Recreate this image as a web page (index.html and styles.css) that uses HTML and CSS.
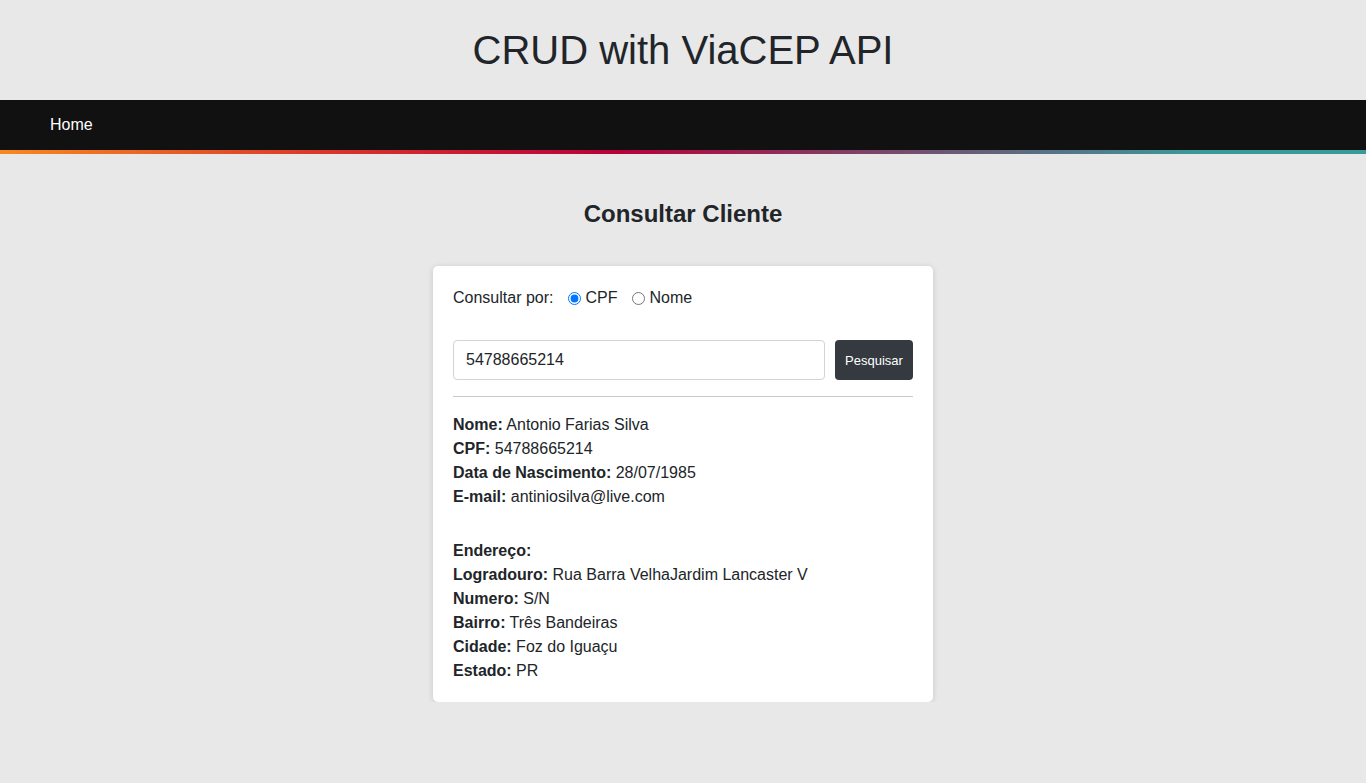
FILE: index.html
```html
<!DOCTYPE html>
<html lang="pt-BR">
<head>
<meta charset="utf-8">
<title>CRUD with ViaCEP API</title>
<link rel="stylesheet" href="styles.css">
</head>
<body>
<header class="site-header">
  <h1 class="site-title">CRUD with ViaCEP API</h1>
</header>
<nav class="navbar">
  <a class="nav-link" href="#">Home</a>
</nav>
<div class="nav-stripe"></div>
<main class="main">
  <h2 class="page-title">Consultar Cliente</h2>
  <section class="card">
    <div class="search-by">
      <span class="search-label">Consultar por:</span>
      <label class="radio"><input type="radio" name="by" checked> CPF</label>
      <label class="radio"><input type="radio" name="by"> Nome</label>
    </div>
    <div class="search-row">
      <input class="search-input" type="text" value="54788665214">
      <button class="search-btn" type="button">Pesquisar</button>
    </div>
    <hr class="divider">
    <div class="info">
      <div><b>Nome:</b> Antonio Farias Silva</div>
      <div><b>CPF:</b> 54788665214</div>
      <div><b>Data de Nascimento:</b> 28/07/1985</div>
      <div><b>E-mail:</b> antiniosilva@live.com</div>
    </div>
    <div class="info address">
      <div><b>Endereço:</b></div>
      <div><b>Logradouro:</b> Rua Barra VelhaJardim Lancaster V</div>
      <div><b>Numero:</b> S/N</div>
      <div><b>Bairro:</b> Três Bandeiras</div>
      <div><b>Cidade:</b> Foz do Iguaçu</div>
      <div><b>Estado:</b> PR</div>
    </div>
  </section>
</main>
</body>
</html>
```

FILE: styles.css
```css
* { box-sizing: border-box; }
html, body { margin: 0; padding: 0; }
body {
  background: #e8e8e8;
  font-family: "Liberation Sans", Arial, sans-serif;
  font-size: 16px;
  line-height: 24px;
  color: #212529;
}
.site-header {
  height: 100px;
  display: flex;
  align-items: center;
  justify-content: center;
}
.site-title {
  margin: 0;
  font-weight: 400;
  font-size: 40px;
  line-height: 48px;
  color: #212529;
}
.navbar {
  background: #111;
  height: 50px;
  display: flex;
  align-items: center;
  padding-left: 50px;
}
.nav-link {
  color: #fff;
  text-decoration: none;
  font-size: 16px;
}
.nav-stripe {
  height: 4px;
  background: linear-gradient(90deg, #f7891f 0%, #d8322c 25%, #b8003a 45%, #6a5a78 70%, #3a9a9a 88%, #3a9a9a 100%);
}
.main {
  display: flex;
  flex-direction: column;
  align-items: center;
  padding-top: 45px;
}
.page-title {
  margin: 0;
  font-size: 24px;
  line-height: 30px;
  font-weight: 700;
  color: #212529;
}
.card {
  margin-top: 37px;
  width: 500px;
  background: #fff;
  border-radius: 5px;
  box-shadow: 0 1px 6px rgba(0,0,0,0.14);
  padding: 20px 20px 19px;
}
.search-by {
  display: flex;
  align-items: center;
  height: 24px;
}
.search-label { margin-right: 14px; }
.radio {
  display: flex;
  align-items: center;
  margin-right: 14px;
}
.radio input {
  margin: 0 5px 0 0;
  width: 13px;
  height: 13px;
}
.search-row {
  display: flex;
  gap: 10px;
  margin-top: 30px;
}
.search-input {
  flex: 1;
  height: 40px;
  border: 1px solid #ced4da;
  border-radius: 4px;
  padding: 0 12px;
  font-family: inherit;
  font-size: 16px;
  color: #212529;
}
.search-btn {
  width: 78px;
  height: 40px;
  border: none;
  border-radius: 4px;
  background: #343a40;
  color: #fff;
  font-family: inherit;
  font-size: 13px;
  padding: 0;
}
.divider {
  margin: 16px 0 16px;
  border: 0;
  border-top: 1px solid #c8c8c8;
}
.address { margin-top: 30px; }
```
